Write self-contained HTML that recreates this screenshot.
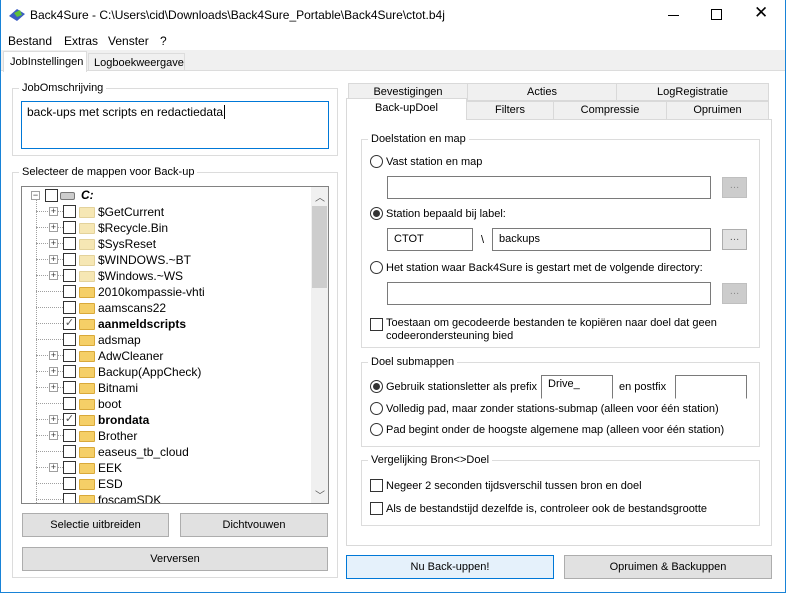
<!DOCTYPE html>
<html><head><meta charset="utf-8"><style>
*{box-sizing:border-box;margin:0;padding:0}
body{width:786px;height:593px;overflow:hidden;background:#fff;font-family:"Liberation Sans",sans-serif;font-size:12px;color:#000;position:relative}
.a{position:absolute;white-space:nowrap}
.r{font-size:11px;line-height:16px}
.win{position:absolute;left:0;top:0;width:786px;height:593px;border:1px solid #1883d7;border-top:none}
.grp{position:absolute;border:1px solid #dcdcdc}
.lg{position:absolute;background:#fff;padding:0 3px;top:-8px;left:6px;line-height:14px}
.inp{position:absolute;border:1px solid #7a7a7a;background:#fff;padding:3px 6px;line-height:15px}
.btn{position:absolute;border:1px solid #adadad;background:#e1e1e1;text-align:center;line-height:22px}
.dbtn{position:absolute;border:1px solid #adadad;background:#e1e1e1;text-align:center;line-height:16px;font-size:10px;color:#555}
.rad{position:absolute;width:13px;height:13px;border:1px solid #333;border-radius:50%;background:#fff}
.rad.on::after{content:"";position:absolute;left:2px;top:2px;width:7px;height:7px;border-radius:50%;background:#333}
.cb{position:absolute;width:13px;height:13px;border:1px solid #333;background:#fff}
.tab{position:absolute;border:1px solid #d9d9d9;background:#f0f0f0;text-align:center;line-height:17px;font-size:11px}
.tr{position:absolute;height:16px;line-height:16px}
.ex{position:absolute;width:9px;height:9px;border:1px solid #a0a0a0;background:#fff;font-size:9px;line-height:7px;text-align:center;color:#333}
.tcb{position:absolute;width:13px;height:13px;border:1px solid #333;background:#fff;font-size:11px;line-height:11px;text-align:center;color:#555}
.fold{position:absolute;width:16px;height:11px;background:#f5cf67;border:1px solid #d9a93a;border-radius:1px}
.fold.g{background:#f6e7b4;border-color:#e3d29b}
</style></head><body>
<div class="win"></div>
<svg class="a" style="left:8px;top:7px" width="18" height="16" viewBox="0 0 18 16"><path d="M1 9 L9 2 L17 7 L9 14 Z" fill="#3a5cc4"/><path d="M6 6 L12 3 L14 8 L9 10Z" fill="#5fbf3a"/></svg>
<div class="a" style="left:30px;top:8px;font-size:12px">Back4Sure - C:\Users\cid\Downloads\Back4Sure_Portable\Back4Sure\ctot.b4j</div>
<div class="a" style="left:668px;top:15px;width:11px;border-top:1px solid #000"></div>
<div class="a" style="left:711px;top:9px;width:11px;height:11px;border:1px solid #000"></div>
<div class="a" style="left:754px;top:3px;font-size:17px;line-height:20px">✕</div>
<div class="a" style="left:8px;top:34px">Bestand</div>
<div class="a" style="left:64px;top:34px">Extras</div>
<div class="a" style="left:108px;top:34px">Venster</div>
<div class="a" style="left:160px;top:34px">?</div>
<div class="a" style="left:1px;top:50px;width:784px;height:21px;background:#f0f0f0;border-bottom:1px solid #dcdcdc"></div>
<div class="a r" style="left:3px;top:51px;width:84px;height:21px;background:#fff;border:1px solid #dcdcdc;border-bottom:none;padding:2px 0 0 6px">JobInstellingen</div>
<div class="a r" style="left:88px;top:53px;width:97px;height:18px;background:#f0f0f0;border:1px solid #dcdcdc;padding:1px 0 0 5px">Logboekweergave</div>
<div class="grp" style="left:12px;top:88px;width:326px;height:68px"><div class="lg r">JobOmschrijving</div></div>
<div class="a" style="left:21px;top:101px;width:308px;height:48px;border:1px solid #0078d7;padding:3px 5px">back-ups met scripts en redactiedata<span style="border-left:1px solid #000;margin-left:1px"></span></div>
<div class="grp" style="left:12px;top:172px;width:326px;height:406px"><div class="lg r">Selecteer de mappen voor Back-up</div></div>
<div class="a" style="left:21px;top:186px;width:308px;height:318px;border:1px solid #828282;overflow:hidden;background:#fff" id="tree">
<div class="a" style="left:289px;top:0;width:17px;height:316px;background:#f0f0f0"></div>
<div class="a" style="left:290px;top:19px;width:15px;height:82px;background:#cdcdcd"></div>
<div class="a" style="left:293px;top:2px;font-size:10px;color:#555">︿</div>
<div class="a" style="left:293px;top:300px;font-size:10px;color:#555">﹀</div>
<div class="a" style="left:14px;top:12px;height:304px;border-left:1px dotted #a0a0a0"></div>
<div class="ex" style="left:9px;top:4px">−</div>
<div class="tcb" style="left:23px;top:2px"></div>
<div class="a" style="left:38px;top:5px;width:15px;height:8px;background:#ccc;border:1px solid #777;border-radius:2px"></div>
<div class="a" style="left:59px;top:1px;font-weight:bold;font-style:italic">C:</div>
</div>
<div class="btn r" style="left:22px;top:513px;width:147px;height:24px;line-height:22px">Selectie uitbreiden</div>
<div class="btn r" style="left:180px;top:513px;width:148px;height:24px;line-height:22px">Dichtvouwen</div>
<div class="btn r" style="left:22px;top:547px;width:306px;height:24px;line-height:22px">Verversen</div>
<div class="tab" style="left:348px;top:83px;width:120px;height:18px">Bevestigingen</div>
<div class="tab" style="left:467px;top:83px;width:150px;height:18px">Acties</div>
<div class="tab" style="left:616px;top:83px;width:153px;height:18px">LogRegistratie</div>
<div class="tab" style="left:466px;top:101px;width:88px;height:19px">Filters</div>
<div class="tab" style="left:553px;top:101px;width:114px;height:19px">Compressie</div>
<div class="tab" style="left:666px;top:101px;width:103px;height:19px">Opruimen</div>
<div class="a" style="left:346px;top:119px;width:426px;height:427px;border:1px solid #d9d9d9;background:#fff"></div>
<div class="a r" style="left:346px;top:98px;width:121px;height:22px;border:1px solid #d9d9d9;border-bottom:none;background:#fff;text-align:center;line-height:18px">Back-upDoel</div>
<div class="r">
<div class="grp" style="left:361px;top:139px;width:399px;height:209px"><div class="lg">Doelstation en map</div></div>
<div class="rad" style="left:370px;top:155px"></div><div class="a" style="left:386px;top:154px">Vast station en map</div>
<div class="inp" style="left:387px;top:176px;width:324px;height:23px"></div>
<div class="dbtn" style="left:722px;top:177px;width:25px;height:21px;background:#ccc;border-color:#bfbfbf;color:#888">…</div>
<div class="rad on" style="left:370px;top:207px"></div><div class="a" style="left:386px;top:206px">Station bepaald bij label:</div>
<div class="inp" style="left:387px;top:228px;width:86px;height:23px">CTOT</div>
<div class="a" style="left:481px;top:232px">\</div>
<div class="inp" style="left:492px;top:228px;width:219px;height:23px">backups</div>
<div class="dbtn" style="left:722px;top:229px;width:25px;height:21px">…</div>
<div class="rad" style="left:370px;top:261px"></div><div class="a" style="left:386px;top:260px">Het station waar Back4Sure is gestart met de volgende directory:</div>
<div class="inp" style="left:387px;top:282px;width:324px;height:23px"></div>
<div class="dbtn" style="left:722px;top:283px;width:25px;height:21px;background:#ccc;border-color:#bfbfbf;color:#888">…</div>
<div class="cb" style="left:370px;top:318px"></div>
<div class="a" style="left:386px;top:317px;line-height:13px">Toestaan om gecodeerde bestanden te kopiëren naar doel dat geen<br>codeerondersteuning bied</div>
<div class="grp" style="left:361px;top:362px;width:399px;height:85px"><div class="lg">Doel submappen</div></div>
<div class="rad on" style="left:370px;top:380px"></div><div class="a" style="left:386px;top:379px">Gebruik stationsletter als prefix</div>
<div class="inp" style="left:541px;top:375px;width:72px;height:24px;padding-top:1px;border-bottom-color:#fff">Drive_</div>
<div class="a" style="left:619px;top:379px">en postfix</div>
<div class="inp" style="left:675px;top:375px;width:72px;height:24px;border-bottom-color:#fff"></div>
<div class="rad" style="left:370px;top:402px"></div><div class="a" style="left:386px;top:401px">Volledig pad, maar zonder stations-submap (alleen voor één station)</div>
<div class="rad" style="left:370px;top:423px"></div><div class="a" style="left:386px;top:422px">Pad begint onder de hoogste algemene map (alleen voor één station)</div>
<div class="grp" style="left:361px;top:460px;width:399px;height:66px"><div class="lg">Vergelijking Bron&lt;&gt;Doel</div></div>
<div class="cb" style="left:370px;top:479px"></div><div class="a" style="left:386px;top:478px">Negeer 2 seconden tijdsverschil tussen bron en doel</div>
<div class="cb" style="left:370px;top:502px"></div><div class="a" style="left:386px;top:501px">Als de bestandstijd dezelfde is, controleer ook de bestandsgrootte</div>
<div class="btn" style="left:346px;top:555px;width:208px;height:24px;background:#e5f1fb;border-color:#0078d7">Nu Back-uppen!</div>
<div class="btn" style="left:564px;top:555px;width:208px;height:24px">Opruimen &amp; Backuppen</div>
</div>
<script>
var items=[["$GetCurrent",1,0,1],["$Recycle.Bin",1,0,1],["$SysReset",1,0,1],["$WINDOWS.~BT",1,0,1],["$Windows.~WS",1,0,1],["2010kompassie-vhti",0,0,0],["aamscans22",0,0,0],["aanmeldscripts",0,1,0],["adsmap",0,0,0],["AdwCleaner",1,0,0],["Backup(AppCheck)",1,0,0],["Bitnami",1,0,0],["boot",0,0,0],["brondata",1,1,0],["Brother",1,0,0],["easeus_tb_cloud",0,0,0],["EEK",1,0,0],["ESD",0,0,0],["foscamSDK",0,0,0]];
var t=document.getElementById('tree'),h='';
items.forEach(function(it,i){var y=17+i*16;
h+='<div class="a" style="left:14px;top:'+(y+7)+'px;width:'+(it[1]?14:27)+'px;border-top:1px dotted #a0a0a0"></div>';
if(it[1])h+='<div class="ex" style="left:27px;top:'+(y+3)+'px">+</div><div class="a" style="left:36px;top:'+(y+7)+'px;width:5px;border-top:1px dotted #a0a0a0"></div>';
h+='<div class="tcb" style="left:41px;top:'+(y+1)+'px">'+(it[2]?'✓':'')+'</div>';
h+='<div class="fold'+(it[3]?' g':'')+'" style="left:57px;top:'+(y+3)+'px"></div>';
h+='<div class="tr" style="left:76px;top:'+y+'px;'+(it[2]?'font-weight:bold':'')+'">'+it[0]+'</div>';});
t.insertAdjacentHTML('beforeend',h);
</script>
</body></html>
